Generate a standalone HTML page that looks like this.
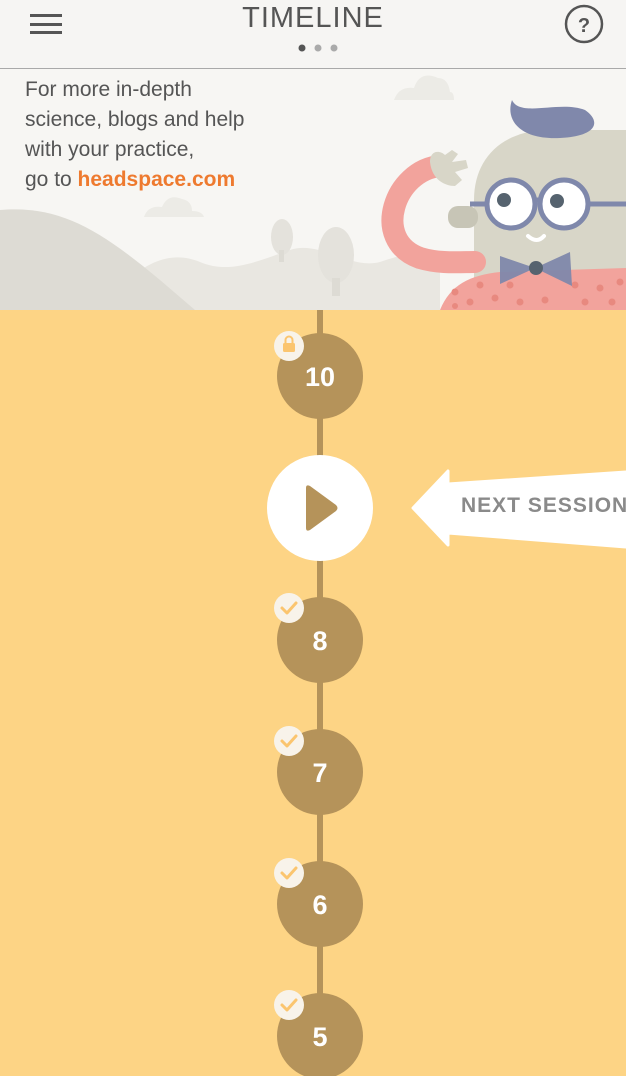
<!DOCTYPE html>
<html><head><meta charset="utf-8"><style>
html,body{margin:0;padding:0;width:626px;height:1076px;overflow:hidden;background:#fdd485;font-family:"Liberation Sans",sans-serif}
svg{position:absolute;left:0;top:0}
.t{position:absolute;left:0;width:626px;text-align:center;font-size:29px;color:#555;top:2px;letter-spacing:1px;font-weight:normal}
.p{position:absolute;left:25px;top:75px;font-size:21px;line-height:30px;color:#555}
.p b{color:#ee7a2f;font-weight:bold}
.n{position:absolute;width:86px;text-align:center;font-weight:bold;color:#fff;font-size:27px;left:277px}
.ns{position:absolute;left:461px;top:494px;font-weight:bold;font-size:21px;color:#8a8a8a;white-space:nowrap;letter-spacing:1px}
</style></head><body>
<svg width="626" height="1076" viewBox="0 0 626 1076">
<rect x="0" y="0" width="626" height="68" fill="#f6f5f3"/>
<rect x="0" y="68" width="626" height="1" fill="#a9a9a9"/>
<rect x="0" y="69" width="626" height="241" fill="#f7f6f3"/>
<rect x="30" y="14" width="32" height="3" fill="#555"/><rect x="30" y="23" width="32" height="3" fill="#555"/><rect x="30" y="31" width="32" height="3" fill="#555"/>
<circle cx="302" cy="48" r="3.5" fill="#555"/><circle cx="318" cy="48" r="3.5" fill="#aaa"/><circle cx="334" cy="48" r="3.5" fill="#aaa"/>
<circle cx="584" cy="24" r="18" fill="none" stroke="#555" stroke-width="2.5"/>
<text x="584" y="32" text-anchor="middle" font-size="20" font-weight="bold" fill="#555" font-family="Liberation Sans">?</text>
<path d="M394 100 q5 -14 20 -12 q6 -18 24 -10 q10 0 12 14 q4 0 4 8 z" fill="#ecebe6"/>
<path d="M144 217 q4 -12 18 -10 q6 -14 20 -8 q10 2 10 12 q10 0 12 6 z" fill="#ecebe6"/>
<path d="M100 310 C140 260 170 250 200 262 C230 275 260 260 290 250 C320 240 350 270 380 262 C400 255 420 250 440 255 L440 310 Z" fill="#e9e7e1"/>
<path d="M0 210 C60 205 100 230 160 280 L195 310 L0 310 Z" fill="#dddbd4"/>
<ellipse cx="282" cy="237" rx="11" ry="18" fill="#e4e2dc"/><rect x="279" y="250" width="5" height="12" fill="#dddbd4"/>
<ellipse cx="336" cy="255" rx="18" ry="28" fill="#e4e2dc"/><rect x="332" y="278" width="8" height="18" fill="#dddbd4"/>
<path d="M474 310 L474 200 C474 160 500 132 545 130 L626 130 L626 310 Z" fill="#d8d6c8"/>
<path d="M512 100 C505 120 520 140 560 138 C600 136 600 120 585 110 C560 100 520 118 512 100 Z" fill="#8088ab"/>
<path d="M440 310 C450 285 470 275 500 272 L626 268 L626 310 Z" fill="#f2a39c"/>
<g fill="#e8897f">
<circle cx="455" cy="292" r="3.5"/><circle cx="470" cy="302" r="3.5"/><circle cx="480" cy="285" r="3.5"/><circle cx="495" cy="298" r="3.5"/><circle cx="510" cy="285" r="3.5"/><circle cx="520" cy="302" r="3.5"/><circle cx="545" cy="300" r="3.5"/><circle cx="575" cy="285" r="3.5"/><circle cx="585" cy="302" r="3.5"/><circle cx="600" cy="288" r="3.5"/><circle cx="612" cy="302" r="3.5"/><circle cx="620" cy="282" r="3.5"/><circle cx="455" cy="306" r="3"/>
</g>
<path d="M440 166 C395 170 370 240 420 258 C440 264 460 262 475 262" fill="none" stroke="#f2a39c" stroke-width="22" stroke-linecap="round"/>
<path d="M430 162 C430 150 440 150 445 155 L452 150 L458 154 L452 162 L466 160 L468 168 L455 172 L462 180 L455 186 C445 186 432 180 430 162 Z" fill="#d8d6c8"/>
<rect x="448" y="206" width="30" height="22" rx="10" fill="#c7c5b6"/>
<g fill="#fff" stroke="#7f88ab" stroke-width="5">
<circle cx="511" cy="204" r="24"/><circle cx="564" cy="204" r="24"/></g>
<path d="M535 200 L540 200 M588 204 L626 204 M487 204 L470 204" stroke="#7f88ab" stroke-width="5"/>
<circle cx="504" cy="200" r="7" fill="#56636f"/><circle cx="557" cy="201" r="7" fill="#56636f"/>
<path d="M528 236 q9 8 16 0" fill="none" stroke="#fff" stroke-width="4" stroke-linecap="round"/>
<path d="M500 256 L535 268 L500 284 Z M570 252 L535 268 L572 286 Z" fill="#7f88ab" opacity="0.95"/>
<circle cx="536" cy="268" r="7" fill="#56636f"/>
<rect x="317" y="310" width="6" height="766" fill="#b5935a"/>
<g fill="#b5935a">
<circle cx="320" cy="376" r="43"/><circle cx="320" cy="640" r="43"/><circle cx="320" cy="772" r="43"/><circle cx="320" cy="904" r="43"/><circle cx="320" cy="1036" r="43"/></g>
<circle cx="320" cy="508" r="53" fill="#fff"/>
<path d="M306 488 L306 528 Q306 532 310 530 L336 511 Q339 508 336 505 L310 486 Q306 484 306 488 Z" fill="#b5935a"/>
<g fill="#f8f3ea"><circle cx="289" cy="346" r="15"/><circle cx="289" cy="608" r="15"/><circle cx="289" cy="741" r="15"/><circle cx="289" cy="873" r="15"/><circle cx="289" cy="1005" r="15"/></g>
<rect x="283" y="343" width="12" height="9" rx="1.5" fill="#fbc56f"/><path d="M285.5 343 v-3 a3.5 3.5 0 0 1 7 0 v3" fill="none" stroke="#fbc56f" stroke-width="2"/>
<g fill="none" stroke="#fbc56f" stroke-width="3" stroke-linecap="round" stroke-linejoin="round">
<path d="M282 608 l5 5 l9 -10"/><path d="M282 741 l5 5 l9 -10"/><path d="M282 873 l5 5 l9 -10"/><path d="M282 1005 l5 5 l9 -10"/></g>
<path d="M413 508 L448 471 L448 484 L626 472 L626 547 L448 533 L448 545 Z" fill="#fff" stroke="#fff" stroke-width="3" stroke-linejoin="round"/>
</svg>
<div class="t">TIMELINE</div>
<div class="p">For more in-depth<br>science, blogs and help<br>with your practice,<br>go to <b>headspace.com</b></div>
<div class="n" style="top:362px">10</div>
<div class="n" style="top:626px">8</div>
<div class="n" style="top:758px">7</div>
<div class="n" style="top:890px">6</div>
<div class="n" style="top:1022px">5</div>
<div class="ns">NEXT SESSION</div>
</body></html>
